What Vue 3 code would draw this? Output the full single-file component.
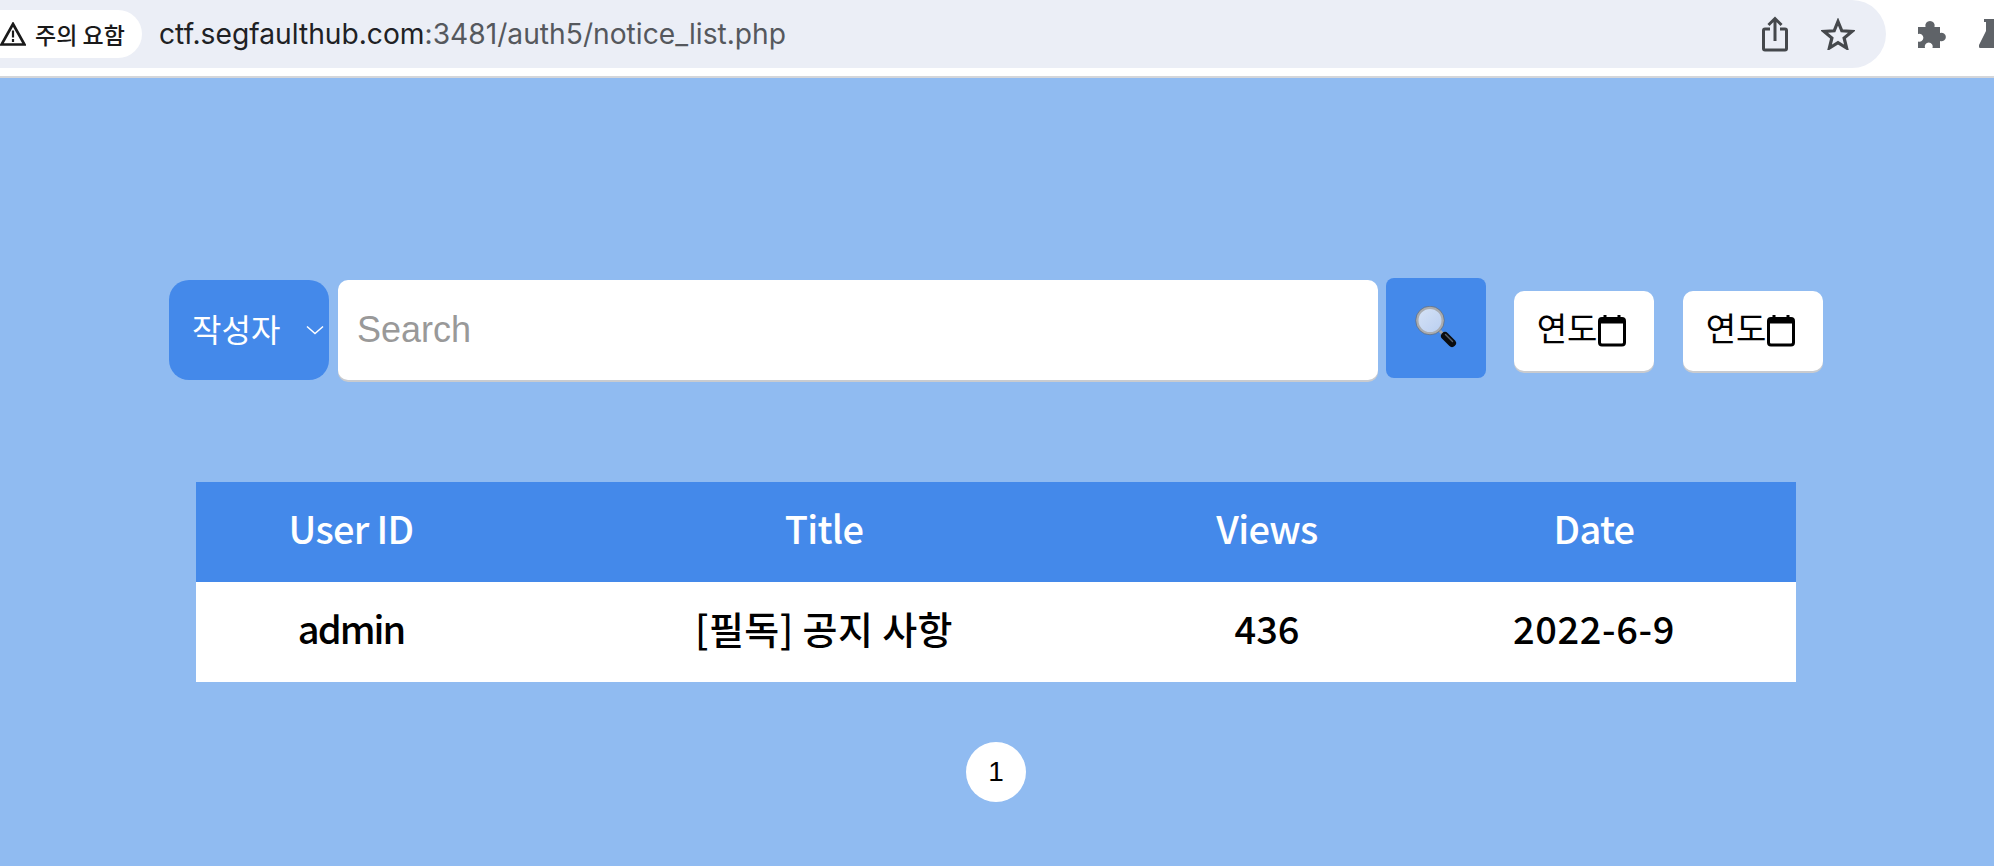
<script setup>
const rows = [{ id: 'admin', title: '[필독] 공지 사항', views: '436', date: '2022-6-9' }]
</script>

<template>
  <div class="page">
    <header class="chrome">
      <div class="omni">
        <div class="warn">
          <svg class="warn-ico" viewBox="0 0 26 24" width="26" height="24">
            <path d="M13 2 24.500 22.500H1.500Z" fill="none" stroke="#1a1a1a" stroke-width="2.700" stroke-linejoin="miter" />
            <path d="M13 8.500v7M13 17v3" stroke="#1a1a1a" stroke-width="2.200" />
          </svg>
          <span>주의 요함</span>
        </div>
        <div class="url"><span class="host">ctf.segfaulthub.com</span><span class="rest">:3481/auth5/notice_list.php</span></div>
        <svg class="share" viewBox="0 0 26 36" width="26" height="36">
          <path d="M8 13H3a1.500 1.500 0 0 0-1.500 1.500v18A1.500 1.500 0 0 0 3 34h20a1.500 1.500 0 0 0 1.500-1.500v-18A1.500 1.500 0 0 0 23 13H18" fill="none" stroke="#45484c" stroke-width="3" />
          <path d="M13 25V3M6.500 9 13 2.500 19.500 9" fill="none" stroke="#45484c" stroke-width="3" />
        </svg>
        <svg class="star" viewBox="0 0 34 32" width="34" height="32">
          <path d="M17 3.500 20.800 12.800 31 13.500 23.100 20 25.600 30 17 24.600 8.400 30 10.900 20 3 13.500 13.200 12.800Z" fill="none" stroke="#45484c" stroke-width="3.200" stroke-linejoin="miter" />
        </svg>
      </div>
      <svg class="puzzle" viewBox="0 0 30 30" width="30" height="30">
        <path d="M2 8h7.500a4.700 4.700 0 1 1 9 0H24v6a4.300 4.300 0 1 1 0 8V29H16.500a4 4 0 1 0-7.500 0H2v-6.500a4 4 0 1 0 0-7.500Z" fill="#5f6368" />
      </svg>
      <svg class="flask" viewBox="0 0 30 30" width="30" height="30">
        <path d="M5 0h12v3h-1v8l10 15a2 2 0 0 1-2 3H2a2 2 0 0 1-2-3L7 12V3H5Z" fill="#5f6368" />
      </svg>
    </header>

    <main class="content">
      <form class="search" @submit.prevent>
        <div class="select">
          <span class="select-label">작성자</span>
          <svg viewBox="0 0 18 10" width="18" height="10"><path d="M1 1.500 9 8.500 17 1.500" fill="none" stroke="#fff" stroke-width="1.500" /></svg>
        </div>
        <input class="input" type="text" placeholder="Search" />
        <button class="go" type="button">
          <svg viewBox="0 0 44 44" width="44" height="44">
            <defs>
              <linearGradient id="lens" x1="0" y1="0" x2="1" y2="1">
                <stop offset="0" stop-color="#d6e3f6" />
                <stop offset="1" stop-color="#b9cef0" />
              </linearGradient>
            </defs>
            <path d="M25 24 31 30" stroke="#a4a7ab" stroke-width="3" />
            <path d="M31 30 38 37" stroke="#0b0d10" stroke-width="8" stroke-linecap="round" />
            <path d="M31.500 28.500 38.500 35.500" stroke="#596068" stroke-width="1.400" stroke-linecap="round" />
            <circle cx="16" cy="14.500" r="12.800" fill="url(#lens)" stroke="#a9acb0" stroke-width="2.600" />
            <circle cx="16" cy="14.500" r="14.300" fill="none" stroke="#6a6e73" stroke-width="0.700" />
          </svg>
        </button>
        <button v-for="n in 2" :key="n" class="year" type="button">
          <span class="year-label">연도</span>
          <svg viewBox="0 0 30 32" width="30" height="32">
            <path d="M8 0v5M22 0v5" stroke="#000" stroke-width="3" />
            <rect x="2.500" y="3.500" width="25" height="26.500" rx="2.500" fill="none" stroke="#000" stroke-width="3" />
            <rect x="2" y="3" width="26" height="5.500" fill="#000" />
          </svg>
        </button>
      </form>

      <div class="table">
        <div class="row head">
          <div>User ID</div><div>Title</div><div>Views</div><div>Date</div>
        </div>
        <div v-for="r in rows" :key="r.id" class="row body">
          <div class="cell-id">{{ r.id }}</div><div class="cell-title">{{ r.title }}</div><div>{{ r.views }}</div><div class="cell-date">{{ r.date }}</div>
        </div>
      </div>

      <nav class="pager"><a class="page-num">1</a></nav>
    </main>
  </div>
</template>

<style>
html, body { margin: 0; background: #90bbf1; }
</style>

<style scoped>
.page {
  width: 1994px;
  height: 866px;
  overflow: hidden;
  background: #90bbf1;
  font-family: "Noto Sans CJK KR", sans-serif;
}
.chrome {
  height: 76px;
  background: #fff;
  border-bottom: 2px solid #d4d6da;
  display: flex;
  align-items: flex-start;
  overflow: hidden;
}
.omni {
  width: 1886px;
  height: 68px;
  flex: none;
  background: #ebeef6;
  border-radius: 0 34px 34px 0;
  display: flex;
  align-items: center;
}
.warn {
  width: 142px;
  height: 48px;
  box-sizing: border-box;
  background: #fff;
  border-radius: 0 24px 24px 0;
  display: flex;
  align-items: center;
  gap: 9px;
  font-size: 23px;
  font-weight: 500;
  color: #1a1a1a;
  flex: none;
}
.warn-ico { flex: none; }
.url {
  margin-left: 17px;
  font-family: Inter, "Liberation Sans", sans-serif;
  font-size: 28.200px;
  white-space: nowrap;
  flex: 1;
}
.host { color: #202124; }
.rest { color: #55585d; }
.share { flex: none; margin-right: 33px; }
.star { flex: none; margin-right: 31px; }
.puzzle { flex: none; margin: 19px 0 0 30px; }
.flask { flex: none; margin: 19px 0 0 33px; }

.content {
  display: flex;
  flex-direction: column;
  align-items: flex-start;
}
.search {
  display: flex;
  align-items: center;
  margin: 200px 0 0 169px;
  height: 104px;
}
.select {
  width: 160px;
  height: 100px;
  box-sizing: border-box;
  background: #4489ea;
  border-radius: 20px;
  color: #fff;
  font-size: 32px;
  display: flex;
  align-items: center;
  justify-content: space-between;
  padding: 0 5px 0 23px;
}
.select-label { margin-bottom: 5px; }
.input {
  width: 1040px;
  height: 100px;
  margin-left: 9px;
  box-sizing: border-box;
  border: 0;
  border-radius: 10px;
  box-shadow: 0 2px 0 #c9cbcf;
  padding: 0 19px;
  font-size: 36px;
  font-family: "Liberation Sans", sans-serif;
  background: #fff;
  outline: none;
}
.input::placeholder { color: #999; opacity: 1; }
.go {
  width: 100px;
  height: 100px;
  margin: -4px 0 0 8px;
  border: 0;
  padding: 0;
  border-radius: 8px;
  background: #4489ea;
  display: flex;
  align-items: center;
  justify-content: center;
}
.year {
  width: 140px;
  height: 80px;
  margin: 2px 0 0 28px;
  box-sizing: border-box;
  border: 0;
  border-radius: 10px;
  background: #fff;
  box-shadow: 0 2px 0 #c9cbcf;
  font-family: "Noto Sans CJK KR", sans-serif;
  font-size: 33px;
  color: #000;
  display: flex;
  align-items: center;
  justify-content: center;
  gap: 0;
  padding: 0 4px 0 0;
}
.year-label { margin-bottom: 8px; }
.year + .year { margin-left: 29px; }
.table {
  width: 1600px;
  margin: 100px 0 0 196px;
}
.row {
  display: grid;
  grid-template-columns: 310px 636px 250px 404px;
  height: 100px;
  align-items: center;
  text-align: center;
  font-size: 38px;
  font-weight: 500;
}
.row > div { margin-bottom: 10px; }
.head { background: #4489ea; color: #fff; letter-spacing: -0.7px; }
.body { background: #fff; color: #000; }
.cell-id { letter-spacing: -2px; }
.cell-title { letter-spacing: 0.4px; }
.cell-date { letter-spacing: 0.6px; }
.pager {
  width: 1992px;
  margin-top: 60px;
  display: flex;
  justify-content: center;
}
.page-num {
  width: 60px;
  height: 60px;
  border-radius: 50%;
  background: #fff;
  color: #000;
  font-size: 28px;
  font-family: "Liberation Sans", sans-serif;
  display: flex;
  align-items: center;
  justify-content: center;
}
</style>
